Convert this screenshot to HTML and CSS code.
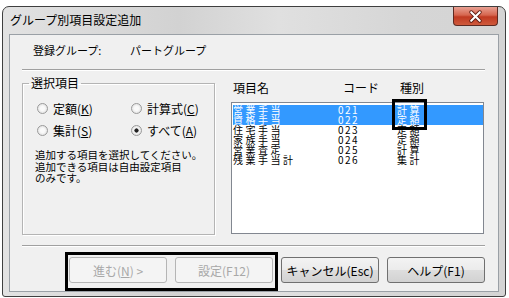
FILE: index.html
```html
<!DOCTYPE html>
<html lang="ja">
<head>
    <meta charset="UTF-8">
    <title>グループ別項目設定追加</title>
    <link rel="stylesheet" href="styles.css">
</head>
<body>
    <div class="window">
        <div class="titlebar">
            <span class="title">グループ別項目設定追加</span>
            <button class="close" type="button">
                <svg width="45" height="19" viewBox="0 0 45 19">
                    <path d="M18 5 L27 14 M27 5 L18 14" stroke="#5a1a10" stroke-width="4" stroke-linecap="round"/>
                    <path d="M18 5 L27 14 M27 5 L18 14" stroke="#fff" stroke-width="2.2" stroke-linecap="round"/>
                </svg>
            </button>
        </div>

        <div class="client">
            <div class="reg">
                <span class="reg-label">登録グループ:</span>
                <span>パートグループ</span>
            </div>
            <div class="sep"></div>

            <div class="main">
                <fieldset class="group">
                    <legend>選択項目</legend>
                    <div class="radios">
                        <label class="opt"><span class="radio"></span><span>定額(<u>K</u>)</span></label>
                        <label class="opt"><span class="radio"></span><span>計算式(<u>C</u>)</span></label>
                        <label class="opt"><span class="radio"></span><span>集計(<u>S</u>)</span></label>
                        <label class="opt"><span class="radio checked"></span><span>すべて(<u>A</u>)</span></label>
                    </div>
                    <p class="desc">追加する項目を選択してください。<br>追加できる項目は自由設定項目<br>のみです。</p>
                </fieldset>

                <div class="list-panel">
                    <div class="list-head">
                        <span>項目名</span>
                        <span>コード</span>
                        <span>種別</span>
                    </div>
                    <div class="listbox">
                        <div class="row selected"><span>営業手当</span><span class="code">021</span><span>計算</span></div>
                        <div class="row selected"><span>資格手当</span><span class="code">022</span><span>定額</span></div>
                        <div class="row"><span>住宅手当</span><span class="code">023</span><span>定額</span></div>
                        <div class="row"><span>家族手当</span><span class="code">024</span><span>定額</span></div>
                        <div class="row"><span>営業査定</span><span class="code">025</span><span>計算</span></div>
                        <div class="row"><span>残業手当計</span><span class="code">026</span><span>集計</span></div>
                        <div class="mark-box"></div>
                    </div>
                </div>
            </div>

            <div class="sep sep-bottom"></div>

            <div class="buttons">
                <div class="mark">
                    <button type="button" class="btn" disabled>進む(<u>N</u>) &gt;</button>
                    <button type="button" class="btn" disabled>設定(F12)</button>
                </div>
                <button type="button" class="btn">キャンセル(Esc)</button>
                <button type="button" class="btn">ヘルプ(F1)</button>
            </div>
        </div>
    </div>
</body>
</html>
```

FILE: styles.css
```css
/* ベース */
* {
    margin: 0;
    padding: 0;
    box-sizing: border-box;
}

body {
    background: #fff;
    font-family: "Noto Sans CJK JP", "Liberation Sans", sans-serif;
    font-size: 11px;
    color: #000;
}

/* ウィンドウ枠 */
.window {
    margin: 6px 0 0 2px;
    width: 504px;
    height: 291px;
    border: 1px solid #3f3f3f;
    border-radius: 7px 7px 3px 3px;
    background: linear-gradient(to right, #e2e2e2, #d2d2d2 35%, #e0e0e0 55%, #d6d6d6 80%, #d4d4d4);
    padding: 0 6px 4px 6px;
}

.titlebar {
    display: flex;
    align-items: flex-start;
    height: 27px;
}

.title {
    margin: 7px 0 0 1px;
    font-size: 12px;
    line-height: 12px;
}

.close {
    margin-left: auto;
    margin-right: 1px;
    width: 45px;
    height: 19px;
    border: 1px solid #5e2a22;
    border-top: none;
    border-radius: 0 0 4px 4px;
    background: linear-gradient(#e8a093, #d6664f 45%, #c03a22 55%, #cf5a3c);
    display: flex;
}

/* クライアント領域 */
.client {
    width: 490px;
    height: 258px;
    border: 1px solid #9aa0a6;
    background: #f0f0f0;
    padding: 0 13px 0 12px;
}

.reg {
    height: 34px;
    display: flex;
    align-items: center;
    padding: 0 0 4px 11px;
}

.reg-label {
    width: 97px;
}

.sep {
    border-top: 1px solid #a0a0a0;
    border-bottom: 1px solid #fff;
}

.main {
    display: flex;
    margin-top: 5px;
}

/* 選択項目グループ */
.group {
    width: 193px;
    height: 159px;
    border: 1px solid #b4b4b4;
    box-shadow: inset 1px 1px #fff, 1px 1px #fff;
    padding: 0 8px 0 14px;
}

.group legend {
    margin-left: -8px;
    padding: 0 2px;
    line-height: 14px;
    font-size: 12px;
}

.radios {
    display: grid;
    grid-template-columns: 94px 1fr;
    row-gap: 6px;
    margin-top: 10px;
}

.opt {
    display: flex;
    align-items: center;
    height: 16px;
    gap: 5px;
    font-size: 12px;
}

.radio {
    width: 11px;
    height: 11px;
    border: 1px solid #9a9a9a;
    border-radius: 50%;
    background: radial-gradient(circle, #fafafa 0 2px, #e2e2e2 5px);
}

.radio.checked {
    background: radial-gradient(circle, #222 0 1.8px, #f6f6f6 2.4px, #e2e2e2 5px);
}

.desc {
    margin: 11px 0 0 -2px;
    line-height: 11.5px;
    font-size: 10.5px;
    white-space: nowrap;
}

/* 項目リスト */
.list-panel {
    margin-left: 16px;
    padding-top: 6px;
}

.list-head {
    display: grid;
    grid-template-columns: 110px 57px 1fr;
    padding-left: 2px;
    line-height: 12px;
    font-size: 12px;
    margin-bottom: 8px;
}

.listbox {
    position: relative;
    width: 253px;
    height: 132px;
    border: 1px solid #828790;
    background: #fff;
    padding: 2px 0 0 1px;
}

.row {
    display: grid;
    grid-template-columns: 105px 59px 1fr;
    height: 10px;
    line-height: 10px;
    font-size: 10px;
    letter-spacing: 2.5px;
}

.row .code {
    letter-spacing: 1.5px;
}

.row.selected {
    background: #3399ff;
    color: #fff;
}

.mark-box {
    position: absolute;
    left: 160px;
    top: -4px;
    width: 35px;
    height: 31px;
    border: 3px solid #000;
}

.sep-bottom {
    margin-top: 10px;
}

/* ボタン */
.buttons {
    display: flex;
    justify-content: flex-end;
    gap: 8px;
    margin-top: 10px;
}

.mark {
    display: flex;
    gap: 8px;
    margin: -2px -2px -5px -1px;
    padding: 2px 2px 5px 1px;
    outline: 3px solid #000;
}

.btn {
    width: 98px;
    height: 26px;
    border: 1px solid #707070;
    border-radius: 3px;
    background: linear-gradient(#f3f3f3, #ebebeb 50%, #dddddd 51%, #d2d2d2);
    font-family: inherit;
    font-size: 12px;
    color: #000;
}

.btn:disabled {
    border-color: #b5b5b5;
    background: #f4f4f4;
    color: #a8a8a8;
}
```
